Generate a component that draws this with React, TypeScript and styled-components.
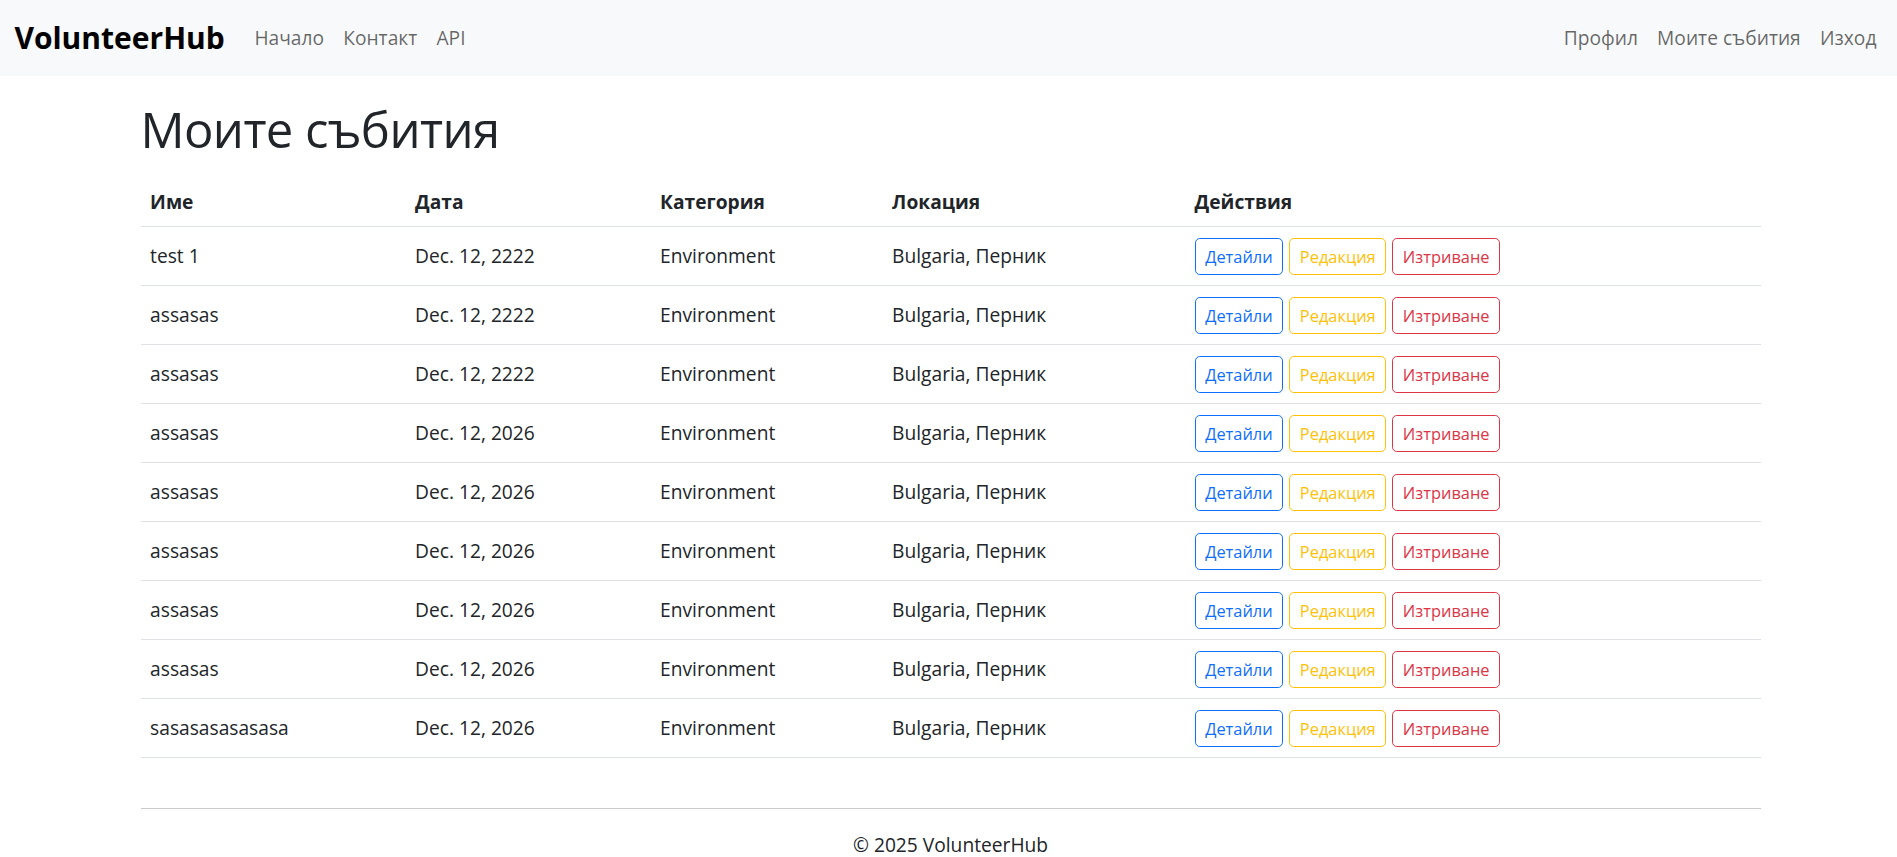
import React from "react";
import styled, { createGlobalStyle } from "styled-components";

const Global = createGlobalStyle`
  html, body { margin: 0; padding: 0; background: #fff; }
  body {
    font-family: "Open Sans", "Noto Sans", sans-serif;
    font-size: 19.2px;
    line-height: 1.5;
    color: #212529;
  }
  * { box-sizing: border-box; }
`;

const NavBar = styled.nav`
  height: 76px;
  background: #f8f9fa;
  display: flex;
  align-items: center;
  padding: 0 11px 0 14.4px;
`;

const Brand = styled.a`
  font-size: 30px;
  font-weight: 700;
  line-height: 1.2;
  color: #000;
  text-decoration: none;
  margin-right: 20px;
`;

const NavList = styled.div<{ $end?: boolean }>`
  display: flex;
  align-items: center;
  margin-left: ${(p) => (p.$end ? "auto" : "0")};
`;

const NavLink = styled.a`
  padding: 9.6px;
  color: rgba(0, 0, 0, 0.6);
  text-decoration: none;
  font-size: 19.2px;
  line-height: 28.8px;
`;

const Main = styled.main`
  width: 1620px;
  margin: 0 auto;
  padding-top: 24px;
  position: relative;
  left: 2px;
`;

const Title = styled.h1`
  margin: 0 0 19.5px 0;
  font-size: 49px;
  font-weight: 500;
  line-height: 58.8px;
  letter-spacing: -0.6px;
`;

const Table = styled.table`
  width: 100%;
  border-collapse: collapse;
  margin-bottom: 50px;
`;

const Th = styled.th`
  text-align: left;
  font-weight: 700;
  padding: 9.6px;
  line-height: 28.8px;
  border-bottom: 1px solid #dee2e6;
  vertical-align: bottom;
`;

const Td = styled.td`
  padding: 10.6px 9.6px;
  line-height: 28.8px;
  border-bottom: 1px solid #dee2e6;
  vertical-align: middle;
  white-space: nowrap;
`;

const Actions = styled.div`
  display: flex;
  gap: 6px;
`;

const Btn = styled.button<{ $c: string }>`
  font-family: inherit;
  font-size: 16.4px;
  line-height: 25.2px;
  padding: 4.8px 9.6px;
  border: 1.2px solid ${(p) => p.$c};
  color: ${(p) => p.$c};
  background: transparent;
  border-radius: 4.8px;
  cursor: pointer;
`;

const Footer = styled.footer`
  width: 1620px;
  margin: 0 auto;
  position: relative;
  left: 2px;
  text-align: center;
`;

const Rule = styled.hr`
  margin: 0 0 22px 0;
  border: 0;
  border-top: 1.2px solid #c9cacb;
`;

const FootText = styled.p`
  margin: 0;
  line-height: 28.8px;
`;

const rows = [
  ["test 1", "Dec. 12, 2222"],
  ["assasas", "Dec. 12, 2222"],
  ["assasas", "Dec. 12, 2222"],
  ["assasas", "Dec. 12, 2026"],
  ["assasas", "Dec. 12, 2026"],
  ["assasas", "Dec. 12, 2026"],
  ["assasas", "Dec. 12, 2026"],
  ["assasas", "Dec. 12, 2026"],
  ["sasasasasasasa", "Dec. 12, 2026"],
];

const widths = [265, 245, 232, 302.5, 575.5];

export default function App() {
  return (
    <>
      <Global />
      <NavBar>
        <Brand href="#">VolunteerHub</Brand>
        <NavList>
          <NavLink href="#">Начало</NavLink>
          <NavLink href="#">Контакт</NavLink>
          <NavLink href="#">API</NavLink>
        </NavList>
        <NavList $end>
          <NavLink href="#">Профил</NavLink>
          <NavLink href="#">Моите събития</NavLink>
          <NavLink href="#">Изход</NavLink>
        </NavList>
      </NavBar>
      <Main>
        <Title>Моите събития</Title>
        <Table>
          <colgroup>
            {widths.map((w, i) => (
              <col key={i} style={{ width: w }} />
            ))}
          </colgroup>
          <thead>
            <tr>
              <Th>Име</Th>
              <Th>Дата</Th>
              <Th>Категория</Th>
              <Th>Локация</Th>
              <Th>Действия</Th>
            </tr>
          </thead>
          <tbody>
            {rows.map((r, i) => (
              <tr key={i}>
                <Td>{r[0]}</Td>
                <Td>{r[1]}</Td>
                <Td>Environment</Td>
                <Td>Bulgaria, Перник</Td>
                <Td>
                  <Actions>
                    <Btn $c="#0d6efd">Детайли</Btn>
                    <Btn $c="#ffc107">Редакция</Btn>
                    <Btn $c="#dc3545">Изтриване</Btn>
                  </Actions>
                </Td>
              </tr>
            ))}
          </tbody>
        </Table>
      </Main>
      <Footer>
        <Rule />
        <FootText>© 2025 VolunteerHub</FootText>
      </Footer>
    </>
  );
}
